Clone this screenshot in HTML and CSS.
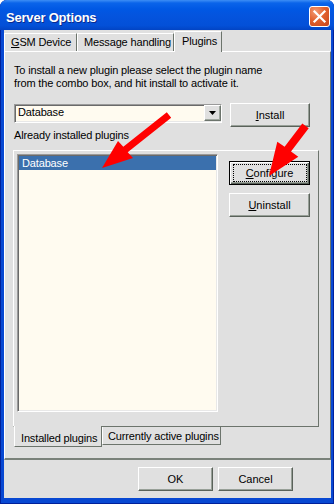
FILE: index.html
```html
<!DOCTYPE html>
<html lang="en">
<head>
  <meta charset="UTF-8" />
  <title>Server Options</title>
  <link rel="stylesheet" href="styles.css">
</head>
<body>
  <div class="window">
    <header class="titlebar">
      <span class="title">Server Options</span>
      <span class="close">
        <svg width="19" height="19" viewBox="0 0 19 19">
          <path d="M4.5 4.5 L14.5 14.5 M14.5 4.5 L4.5 14.5" stroke="#fff" stroke-width="2.2" stroke-linecap="square" />
        </svg>
      </span>
    </header>

    <div class="client">
      <nav class="tabs">
        <div class="tab tab-gsm"><u>G</u>SM Device</div>
        <div class="tab tab-msg">Message handling</div>
        <div class="tab tab-plugins active">Plugins</div>
      </nav>

      <section class="page">
        <p class="hint">To install a new plugin please select the plugin name<br>from the combo box, and hit install to activate it.</p>

        <div class="install-row">
          <div class="combo">
            <span class="combo-text">Database</span>
            <span class="combo-drop">
              <svg width="7" height="4" viewBox="0 0 7 4"><polygon points="0,0 7,0 3.5,4" fill="#000" /></svg>
            </span>
          </div>
          <button class="btn btn-install"><span><u>I</u>nstall</span></button>
        </div>

        <p class="label">Already installed plugins</p>

        <div class="subtabs">
          <div class="subpage">
            <div class="list">
              <div class="item selected">Database</div>
            </div>
            <div class="side">
              <button class="btn btn-default"><span class="focus"><u>C</u>onfigure</span></button>
              <button class="btn"><span><u>U</u>ninstall</span></button>
            </div>
          </div>
          <div class="subtab-strip">
            <div class="subtab subtab-installed active">Installed plugins</div>
            <div class="subtab subtab-active">Currently active plugins</div>
          </div>
        </div>
      </section>

      <footer class="footer">
        <button class="btn btn-dialog"><span>OK</span></button>
        <button class="btn btn-dialog"><span>Cancel</span></button>
      </footer>
    </div>

    <!-- setas vermelhas por cima da janela -->
    <svg class="arrows" width="334" height="504" viewBox="0 0 334 504">
      <polygon fill="#f00" points="102,168 118,141 123.3,146.8 166.8,112.3 171.2,117.7 127.7,152.2 133,158" />
      <polygon fill="#f00" points="269,176 277.3,141.7 284.6,146.8 302.3,123.4 308.7,128.2 291,151.6 298.3,156.7" />
    </svg>
  </div>
</body>
</html>
```

FILE: styles.css
```css
* {
  margin: 0; padding: 0; box-sizing: border-box;
}

html, body {
  width: 334px;
  height: 504px;
  overflow: hidden;
  background: #fff;
}

body {
  font-family: 'Liberation Sans', Arial, sans-serif;
  font-size: 11px;
  line-height: 13px;
  letter-spacing: -0.15px;
  color: #000;
}

.window {
  position: relative;
  width: 334px;
  height: 504px;
  display: flex;
  flex-direction: column;
  border-radius: 7px 7px 0 0;
  overflow: hidden;
  background: #0848d2;
  box-shadow: inset 1px 0 0 #00209a, inset -1px 0 0 #00209a, inset 0 -1px 0 #00209a;
}

.titlebar {
  flex: none;
  height: 30px;
  display: flex;
  justify-content: space-between;
  align-items: flex-start;
  padding: 0 4px 0 6px;
  background: linear-gradient(to bottom, #3d8ef5 0, #0a64ea 3px, #0058e4 9px, #0454de 50%, #0350d8 85%, #0244c4 100%);
}

.title {
  margin-top: 11px;
  font-size: 13px;
  font-weight: bold;
  letter-spacing: -0.2px;
  color: #fff;
  text-shadow: 1px 1px 0 #0a2a8e;
}

.close {
  margin-top: 6px;
  width: 21px;
  height: 21px;
  display: flex;
  align-items: center;
  justify-content: center;
  border: 1px solid #fff;
  border-radius: 3px;
  background: radial-gradient(circle at 30% 25%, #f39a74 0, #e2622f 45%, #c8441a 100%);
}

.client {
  height: 468px;
  margin: 0 3px 0 4px;
  background: #e0e0e0;
  display: flex;
  flex-direction: column;
}

/* abas de cima */
.tabs {
  display: flex;
  align-items: flex-end;
  height: 21px;
  padding-top: 1px;
}

.tab {
  height: 18px;
  padding: 2px 0 0 6px;
  border: 1px solid;
  border-bottom: none;
  border-color: #fff #6c746c #fff #fff;
  white-space: nowrap;
}

.tab-gsm { width: 73px; }
.tab-msg { width: 97px; }
.tab-plugins { width: 48px; }

.tab.active {
  position: relative;
  z-index: 1;
  height: 21px;
  margin-bottom: -1px;
  padding: 3px 0 0 7px;
  background: #e0e0e0;
}

.page {
  height: 409px;
  padding: 12px 0 0 9px;
  border: 1px solid;
  border-bottom-width: 2px;
  border-color: #fff #6c746c #7a827a #fff;
}

.install-row {
  display: flex;
  align-items: flex-start;
  gap: 8px;
  margin-top: 14px;
}

.combo {
  width: 208px;
  height: 19px;
  display: flex;
  justify-content: space-between;
  border: 1px solid;
  border-color: #9a9a9a #fff #fff #9a9a9a;
  box-shadow: inset 1px 1px 0 #6a6a6a, inset -1px -1px 0 #e8e8e8;
  background: #fffbf0;
  padding: 1px;
}

.combo-text {
  padding-left: 2px;
}

.combo-drop {
  width: 17px;
  height: 16px;
  margin: -1px -1px 0 0;
  display: flex;
  align-items: center;
  justify-content: center;
  background: #e0e0e0;
  border: 1px solid;
  border-color: #fff #6c746c #6c746c #fff;
  box-shadow: inset -1px -1px 0 #a0a8a0;
}

.btn {
  width: 81px;
  height: 24px;
  display: flex;
  align-items: center;
  justify-content: center;
  font: inherit;
  color: #000;
  background: #e0e0e0;
  border: 1px solid;
  border-color: #fff #5a625a #5a625a #fff;
  box-shadow: inset -1px -1px 0 #98a098;
}

.btn-install {
  width: 80px;
  margin-top: -1px;
}

.btn-default {
  border-color: #000;
  box-shadow: inset 1px 1px 0 #fff, inset -1px -1px 0 #5a625a, inset -2px -2px 0 #98a098;
}

.focus {
  width: 74px;
  height: 18px;
  display: flex;
  align-items: center;
  justify-content: center;
  border: 1px dotted #000;
}

.label {
  margin-top: 2px;
}

/* painel interno com abas embaixo */
.subtabs {
  width: 306px;
  margin: 8px 0 0 -1px;
}

.subpage {
  height: 277px;
  display: flex;
  align-items: flex-start;
  gap: 11px;
  padding: 3px 0 0 3px;
  border: 1px solid;
  border-color: #fff #6c746c #6c746c #fff;
}

.list {
  width: 201px;
  height: 258px;
  padding: 1px;
  border: 1px solid;
  border-color: #9a9a9a #fff #fff #9a9a9a;
  box-shadow: inset 1px 1px 0 #6a6a6a, inset -1px -1px 0 #e8e8e8;
  background: #fffbf0;
}

.item {
  height: 14px;
  padding: 1px 0 0 3px;
}

.item.selected {
  background: #3b70ad;
  color: #fff;
}

.side {
  display: flex;
  flex-direction: column;
  gap: 8px;
  padding-top: 7px;
}

.subtab-strip {
  display: flex;
  align-items: flex-start;
  padding-left: 1px;
}

.subtab {
  height: 18px;
  padding: 3px 0 0 5px;
  border: 1px solid;
  border-top: none;
  border-color: #fff #6c746c #6c746c #fff;
  white-space: nowrap;
}

.subtab-installed { width: 88px; }
.subtab-active { width: 119px; }

.subtab.active {
  position: relative;
  height: 21px;
  margin-top: -1px;
  padding: 6px 0 0 6px;
  background: #e0e0e0;
}

.footer {
  display: flex;
  justify-content: flex-end;
  gap: 5px;
  padding: 7px 38px 0 0;
}

.btn-dialog {
  width: 75px;
}

.arrows {
  position: absolute;
  top: 0; left: 0;
  pointer-events: none;
}
```
